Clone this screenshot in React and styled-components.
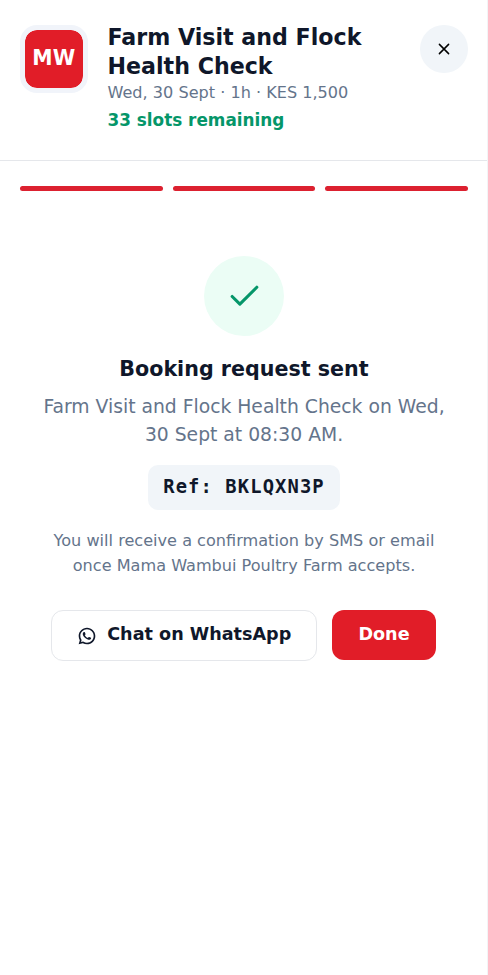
import React from "react";
import styled, { createGlobalStyle } from "styled-components";
import { RiWhatsappLine } from "react-icons/ri";

const GlobalStyle = createGlobalStyle`
  *, *::before, *::after { box-sizing: border-box; }
  body { margin: 0; background: #fff; }
  h1, h2, p { margin: 0; }
  button { font: inherit; cursor: pointer; }
`;

const Panel = styled.main`
  width: 100%;
  height: 975px;
  border-right: 1px solid #f3f4f6;
  background: #fff;
  color: #0f172a;
  font-family: "DejaVu Sans", sans-serif;
  overflow: hidden;
`;

const Header = styled.header`
  display: flex;
  align-items: flex-start;
  height: 161px;
  padding: 25px 19.5px 0 20px;
  border-bottom: 1px solid #e5e7eb;
`;

const Logo = styled.div`
  display: grid;
  place-items: center;
  flex: none;
  width: 67.5px;
  height: 67.5px;
  margin-right: 20px;
  padding-bottom: 1px;
  border: 5px solid #f1f4fa;
  border-radius: 17px;
  background: #e11d28;
  background-clip: padding-box;
  color: #fff;
  font-size: 20.4px;
  font-weight: 700;
`;

const Info = styled.div`
  flex: 1;
  min-width: 0;
  margin-top: -2px;
`;

const Title = styled.h1`
  font-size: 22.15px;
  line-height: 29px;
`;

const Meta = styled.p`
  color: #64748b;
  font-size: 16.1px;
  line-height: 24px;
`;

const Slots = styled.p`
  margin-top: 3px;
  color: #059669;
  font-size: 16.85px;
  line-height: 25px;
  font-weight: 700;
`;

const CloseButton = styled.button`
  display: grid;
  place-items: center;
  flex: none;
  width: 47.5px;
  height: 47.5px;
  padding: 0;
  border: 0;
  border-radius: 50%;
  background: #f1f5f9;
  color: #000;
`;

const Progress = styled.div`
  display: grid;
  grid-template-columns: repeat(3, 1fr);
  gap: 10px;
  padding: 25px 19.5px 0 20px;
`;

const Step = styled.span`
  height: 5px;
  border-radius: 3px;
  background: #dc2130;
`;

const Content = styled.section`
  display: flex;
  flex-direction: column;
  align-items: center;
  padding: 65px 20px 0 21px;
  text-align: center;
`;

const Success = styled.div`
  display: grid;
  place-items: center;
  width: 80px;
  height: 80px;
  border-radius: 50%;
  background: #ebfdf5;
  color: #059669;
`;

const Heading = styled.h2`
  margin-top: 20px;
  font-size: 20.65px;
  line-height: 26px;
`;

const Summary = styled.p`
  max-width: 420px;
  margin-top: 11px;
  color: #64748b;
  font-size: 18.75px;
  line-height: 28px;
`;

const Reference = styled.div`
  display: flex;
  align-items: center;
  height: 45px;
  margin-top: 16px;
  padding: 0 15px 2px;
  border-radius: 10px;
  background: #f1f5f9;
  font: 700 18.8px "DejaVu Sans Mono", monospace;
  letter-spacing: 1.12px;
`;

const Note = styled.p`
  max-width: 400px;
  margin-top: 18px;
  color: #64748b;
  font-size: 16.13px;
  line-height: 25px;
`;

const Actions = styled.div`
  display: flex;
  align-items: flex-start;
  gap: 15px;
  margin-top: 32px;
  margin-right: 1px;
`;

const Action = styled.button`
  display: flex;
  align-items: center;
  justify-content: center;
  gap: 10px;
  width: ${({ $primary }) => ($primary ? "103.5px" : "266px")};
  height: ${({ $primary }) => ($primary ? "50px" : "51px")};
  padding: 0 0 ${({ $primary }) => ($primary ? "2px" : "3px")};
  border: ${({ $primary }) => ($primary ? "0" : "1px solid #e5e7eb")};
  border-radius: 12px;
  background: ${({ $primary }) => ($primary ? "#e11d28" : "#fff")};
  color: ${({ $primary }) => ($primary ? "#fff" : "#0f172a")};
  font-size: 17.6px;
  font-weight: 700;
  white-space: nowrap;
`;

const ChatIcon = styled(RiWhatsappLine)`
  width: 20px;
  height: 20px;
  margin-top: 4px;
`;

export default function App() {
  return (
    <>
      <GlobalStyle />
      <Panel>
        <Header>
          <Logo>MW</Logo>
          <Info>
            <Title>Farm Visit and Flock Health Check</Title>
            <Meta>Wed, 30 Sept · 1h · KES 1,500</Meta>
            <Slots>33 slots remaining</Slots>
          </Info>
          <CloseButton aria-label="Close">
            <svg width="20" height="20" viewBox="0 0 20 20" fill="none" stroke="currentColor" strokeWidth="1.5" strokeLinecap="round">
              <path d="m5.4 5.4 9.2 9.2m0-9.2-9.2 9.2" />
            </svg>
          </CloseButton>
        </Header>
        <Progress>
          <Step />
          <Step />
          <Step />
        </Progress>
        <Content>
          <Success>
            <svg width="37" height="37" viewBox="0 0 24 24" fill="none" stroke="currentColor" strokeWidth="2" strokeLinecap="round" strokeLinejoin="round">
              <path d="M20 6 9 17l-5-5" />
            </svg>
          </Success>
          <Heading>Booking request sent</Heading>
          <Summary>Farm Visit and Flock Health Check on Wed, 30 Sept at 08:30 AM.</Summary>
          <Reference>Ref: BKLQXN3P</Reference>
          <Note>You will receive a confirmation by SMS or email once Mama Wambui Poultry Farm accepts.</Note>
          <Actions>
            <Action>
              <ChatIcon />
              Chat on WhatsApp
            </Action>
            <Action $primary>Done</Action>
          </Actions>
        </Content>
      </Panel>
    </>
  );
}
